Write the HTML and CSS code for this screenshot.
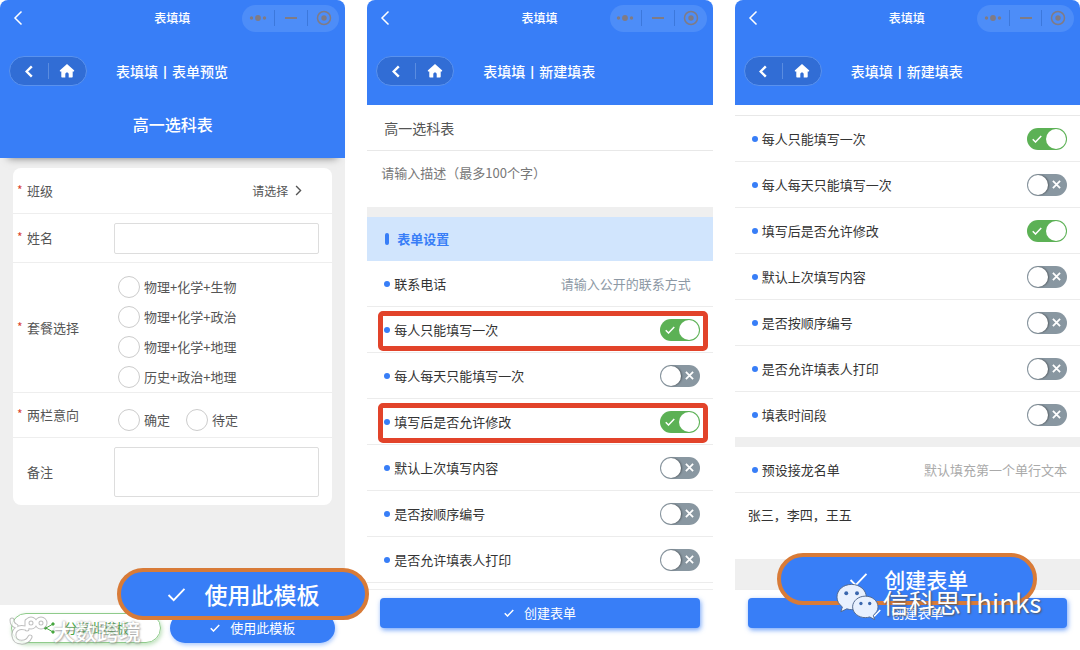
FILE: index.html
```html
<!DOCTYPE html>
<html lang="zh-CN">
<head>
    <meta charset="UTF-8">
    <meta name="viewport" content="width=device-width, initial-scale=1.0">
    <title>表填填</title>
    <link rel="stylesheet" href="styles.css">
    <script src="script.js" defer></script>
</head>
<body>
    <svg class="sprite" aria-hidden="true">
        <symbol id="icon-back" viewBox="0 0 10 16"><path d="M8.500 1.500 2 8l6.500 6.500"/></symbol>
        <symbol id="icon-home" viewBox="0 0 16 16"><path d="M8 1 1 7.200c-.5.600-.2 1.300.5 1.300h.8v5c0 .6.400 1 1 1h3v-3.300c0-1 .7-1.700 1.700-1.700s1.700.7 1.700 1.700v3.300h3c.6 0 1-.4 1-1v-5h.8c.7 0 1-.7.500-1.300z"/></symbol>
        <symbol id="icon-check" viewBox="0 0 20 16"><path d="m1.500 8.500 5.500 5.500L18.500 2"/></symbol>
        <symbol id="icon-cross" viewBox="0 0 10 10"><path d="m1 1 8 8M9 1 1 9"/></symbol>
        <symbol id="icon-dots" viewBox="0 0 18 8"><circle cx="2.500" cy="4" r="1.700"/><circle cx="9" cy="4" r="2.900"/><circle cx="15.500" cy="4" r="1.700"/></symbol>
        <symbol id="icon-target" viewBox="0 0 16 16"><circle cx="8" cy="8" r="6.500" fill="none" stroke="currentColor" stroke-width="1.500"/><circle cx="8" cy="8" r="2.700"/></symbol>
        <symbol id="icon-share" viewBox="0 0 12 12"><path d="M10 2 3 6l7 4"/><circle cx="10" cy="2" r="1.200"/><circle cx="2.500" cy="6" r="1.200"/><circle cx="10" cy="10" r="1.200"/></symbol>
    </svg>

    <main class="screens">
        <!-- preview -->
        <section class="phone preview">
            <header class="header" data-title="表单预览"></header>
            <h1 class="form-title">高一选科表</h1>
            <div class="preview-body">
                <form class="card">
                    <div class="field">
                        <span class="field-label required">班级</span>
                        <button type="button" class="picker">请选择
                            <svg class="icon-next"><use href="#icon-back"/></svg>
                        </button>
                    </div>
                    <div class="field field-name">
                        <label class="field-label required" for="name">姓名</label>
                        <input class="text-box" id="name" type="text">
                    </div>
                    <div class="field" role="radiogroup" aria-label="套餐选择">
                        <span class="field-label required">套餐选择</span>
                        <div class="options">
                            <label class="option"><input type="radio" name="combo">物理+化学+生物</label>
                            <label class="option"><input type="radio" name="combo">物理+化学+政治</label>
                            <label class="option"><input type="radio" name="combo">物理+化学+地理</label>
                            <label class="option"><input type="radio" name="combo">历史+政治+地理</label>
                        </div>
                    </div>
                    <div class="field" role="radiogroup" aria-label="两栏意向">
                        <span class="field-label required">两栏意向</span>
                        <div class="options options-inline">
                            <label class="option"><input type="radio" name="intent">确定</label>
                            <label class="option"><input type="radio" name="intent">待定</label>
                        </div>
                    </div>
                    <div class="field field-note">
                        <label class="field-label" for="note">备注</label>
                        <textarea class="text-box" id="note"></textarea>
                    </div>
                </form>
            </div>
            <footer class="footer-split">
                <button class="share-button"><svg class="icon-share"><use href="#icon-share"/></svg>分享此模板</button>
                <button class="use-button"><svg class="icon-check"><use href="#icon-check"/></svg>使用此模板</button>
                <div class="callout callout-use"><svg class="icon-check"><use href="#icon-check"/></svg>使用此模板</div>
                <div class="brand">
                    <svg class="brand-logo" viewBox="0 0 40 32">
                        <path class="logo-edge" d="M3 6c0 3 1 5 4 6M16 14c-6-2-12 2-11 8 1 8 13 8 16 1M18 7v8M18 9a4 4 0 1 1 8 0 4 4 0 0 1-8 0M28 9a4 4 0 1 1 8 0 4 4 0 0 1-8 0"/>
                        <path class="logo-fill" d="M3 6c0 3 1 5 4 6M16 14c-6-2-12 2-11 8 1 8 13 8 16 1M18 7v8M18 9a4 4 0 1 1 8 0 4 4 0 0 1-8 0M28 9a4 4 0 1 1 8 0 4 4 0 0 1-8 0"/>
                    </svg>
                    <span>大数跨境</span>
                </div>
            </footer>
        </section>

        <!-- new form, top of the page -->
        <section class="phone">
            <header class="header" data-title="新建填表"></header>
            <input class="title-input" type="text" value="高一选科表" aria-label="表单标题">
            <textarea class="desc-input" placeholder="请输入描述（最多100个字）" aria-label="描述"></textarea>
            <div class="divider"></div>
            <h2 class="section-title">表单设置</h2>
            <div class="setting">
                <label for="phone">联系电话</label>
                <input class="phone-input" id="phone" type="text" placeholder="请输入公开的联系方式">
            </div>
            <div class="settings" data-marked="0,2" data-count="6"></div>
            <footer class="footer">
                <button class="create-button"><svg class="icon-check"><use href="#icon-check"/></svg>创建表单</button>
            </footer>
        </section>

        <!-- new form, scrolled down -->
        <section class="phone">
            <header class="header" data-title="新建填表"></header>
            <div class="scrolled-edge"></div>
            <div class="settings settings-last" data-marked="" data-count="7"></div>
            <div class="divider"></div>
            <div class="setting">
                <span>预设接龙名单</span>
                <span class="hint">默认填充第一个单行文本</span>
            </div>
            <p class="names">张三，李四，王五</p>
            <div class="filler"></div>
            <footer class="footer">
                <button class="create-button"><svg class="icon-check"><use href="#icon-check"/></svg>创建表单</button>
                <div class="callout callout-create"><svg class="icon-check"><use href="#icon-check"/></svg>创建表单</div>
                <div class="account">
                    <svg class="wechat" viewBox="0 0 44 38">
                        <path d="M16 1C7.500 1 1 6.500 1 14c0 4 2 7.500 5.500 10L5 29l6-3c2 .6 3.500.8 5 .8 8.500 0 15-5.600 15-12.800S24.500 1 16 1z"/>
                        <circle class="eye" cx="10.500" cy="10" r="2"/><circle class="eye" cx="21.500" cy="10" r="2"/>
                        <path d="M30 13c-7 0-13 4.800-13 11s6 11 13 11c1.500 0 3-.2 4.500-.7l5 2.700-1.300-4.500C41 30.500 43 27.500 43 24c0-6.200-6-11-13-11z"/>
                        <circle class="eye" cx="25.500" cy="20.500" r="1.700"/><circle class="eye" cx="34.500" cy="20.500" r="1.700"/>
                    </svg>
                    <span>信科思Thinks</span>
                </div>
            </footer>
        </section>
    </main>
</body>
</html>
```
FILE: styles.css
```css
* {
    box-sizing: border-box;
}
body {
    margin: 0;
    background-color: white;
    color: #333;
    font-family: "Noto Sans CJK SC", sans-serif;
    font-size: 13px;
    line-height: 20px;
}
h1, h2, p {
    margin: 0;
}
button, input, textarea {
    font: inherit;
    color: inherit;
    margin: 0;
    padding: 0;
    border: none;
    background: none;
}
textarea {
    display: block;
    resize: none;
}
button {
    cursor: pointer;
}
svg {
    flex: none;
    fill: currentColor;
}
.sprite {
    position: absolute;
    width: 0;
    height: 0;
}
#icon-back, #icon-check, #icon-cross, #icon-share {
    stroke: currentColor;
}
#icon-back, #icon-check, #icon-cross, #icon-share path {
    fill: none;
}
.screens {
    display: grid;
    grid-template-columns: repeat(3, minmax(0, 1fr));
    gap: 22px;
    min-height: 100vh;
}
.phone {
    display: flex;
    flex-direction: column;
}

/* header */
.header {
    background-color: #387ef7;
    color: white;
    border-radius: 8px 8px 0 0;
    height: 105px;
}
.status {
    display: grid;
    grid-template-columns: 1fr auto 1fr;
    align-items: center;
    height: 36px;
    padding: 0 6px 0 13px;
    font-size: 12px;
    font-weight: 500;
}
.status-title {
    padding-right: 8px;
}
.back {
    display: flex;
}
.back svg {
    width: 10px;
    height: 16px;
    stroke-width: 1.5;
}
.capsule {
    justify-self: end;
    display: flex;
    align-items: center;
    height: 27px;
    width: 97px;
    border-radius: 14px;
    background-color: #4d8df8;
    color: #807b84;
}
.capsule span, .nav-pill button {
    flex: 1;
    display: flex;
    justify-content: center;
    align-items: center;
    height: 16px;
}
.capsule span + span {
    border-left: 1px solid #3c78dc;
}
.icon-dots {
    width: 18px;
    height: 8px;
}
.icon-target {
    width: 16px;
    height: 16px;
}
.minus {
    width: 12px;
    height: 2px;
    background-color: currentColor;
}
.nav {
    display: flex;
    align-items: center;
    gap: 29px;
    padding: 20px 9px 0;
    font-size: 14px;
    font-weight: 500;
    line-height: 18px;
}
.nav-pill {
    display: flex;
    align-items: center;
    width: 78px;
    height: 30px;
    border: 1px solid #5a92ee;
    border-radius: 15px;
    background-color: #316dd5;
}
.nav-pill button + button {
    border-left: 1px solid #5a8ce0;
}
.nav-pill .icon-back {
    width: 8px;
    height: 13px;
    stroke-width: 3;
}
.icon-home {
    width: 16px;
    height: 16px;
}

/* preview */
.form-title {
    position: relative;
    background-color: #387ef7;
    color: white;
    height: 53px;
    padding-top: 7px;
    font-size: 16px;
    font-weight: 500;
    line-height: 24px;
    text-align: center;
    box-shadow: 0 8px 8px -8px rgba(0, 0, 0, 0.5);
}
.preview-body {
    flex: 1;
    background-color: #efefef;
    padding: 10px 13px;
    color: #555;
}
.card {
    background-color: white;
    border-radius: 8px;
}
.field {
    display: flex;
    align-items: center;
    min-height: 45px;
    padding: 0 13px 0 14px;
}
.field + .field {
    border-top: 1px solid #eee;
}
.field-name {
    min-height: 49px;
}
.field-note {
    min-height: 68px;
}
.field-label {
    position: relative;
    width: 87px;
}
.required::before {
    content: "*";
    position: absolute;
    left: -10px;
    top: -1px;
    color: #d9432f;
    font-size: 12px;
}
.picker {
    display: flex;
    align-items: center;
    gap: 7px;
    margin-left: auto;
    padding-right: 17px;
    font-size: 12px;
}
.icon-next {
    width: 7px;
    height: 11px;
    stroke-width: 2;
    transform: rotate(180deg);
}
.text-box {
    flex: 1;
    min-width: 0;
    height: 31px;
    padding: 4px 8px;
    border: 1px solid #ddd;
    border-radius: 2px;
}
.field-note .text-box {
    height: 50px;
}
.options {
    padding: 9px 0 0 4px;
}
.options-inline {
    display: flex;
    gap: 16px;
}
.option {
    display: flex;
    align-items: center;
    gap: 4px;
    height: 30px;
}
.option input {
    appearance: none;
    width: 22px;
    height: 22px;
    border: 1px solid #ccc;
    border-radius: 50%;
}
.option input:checked {
    border: 6px solid #387ef7;
}
.footer-split {
    position: relative;
    display: flex;
    align-items: center;
    gap: 9px;
    height: 45px;
    padding: 0 10px 0 11px;
}
.share-button, .use-button {
    display: flex;
    align-items: center;
    justify-content: center;
    height: 30px;
    border-radius: 15px;
}
.share-button {
    flex: 9;
    gap: 9px;
    border: 1px solid #8fcb8b;
    color: #46a63f;
    box-shadow: 1px 2px 4px rgba(91, 177, 86, 0.4);
}
.icon-share {
    width: 12px;
    height: 12px;
}
.use-button {
    flex: 10;
    gap: 10px;
    background-color: #387ef7;
    color: white;
    box-shadow: 1px 2px 4px rgba(56, 126, 247, 0.4);
}
.icon-check {
    width: 10px;
    height: 8px;
    stroke-width: 3;
}

/* enlarged button drawn over the footer */
.callout {
    position: absolute;
    display: flex;
    align-items: center;
    justify-content: center;
    height: 52px;
    border: 4px solid #d87b38;
    border-radius: 26px;
    background-color: #387ef7;
    color: white;
    font-weight: 500;
}
.callout .icon-check {
    width: 19px;
    height: 15px;
    stroke-width: 2;
}
.callout-use {
    left: 117px;
    bottom: 30px;
    width: 252px;
    gap: 19px;
    font-size: 23px;
    z-index: 1;
}
.callout-create {
    left: 42px;
    bottom: 45px;
    width: 260px;
    gap: 16px;
    padding-left: 4px;
    font-size: 21px;
}
.brand, .account {
    position: absolute;
    display: flex;
    align-items: center;
    color: white;
    white-space: nowrap;
}
.brand {
    left: 9px;
    bottom: 4px;
    gap: 4px;
    font-size: 22px;
    font-weight: 500;
    line-height: 32px;
    text-shadow: 0 0 2px #777, 1px 1px 2px #999;
    opacity: 0.75;
}
.brand-logo {
    width: 40px;
    height: 32px;
}
.logo-edge, .logo-fill {
    fill: none;
    stroke: #aaa;
    stroke-width: 5;
    stroke-linecap: round;
}
.logo-fill {
    stroke: white;
    stroke-width: 3;
}
.account {
    left: 101px;
    bottom: 29px;
    gap: 4px;
    font-size: 26px;
    line-height: 38px;
    text-shadow: 1px 1px 2px #555;
}
.wechat {
    width: 43px;
    height: 38px;
    fill: #e8f0fe;
    stroke: #53698f;
    stroke-width: 1;
}
.wechat .eye {
    fill: #3b67ae;
    stroke: none;
}

/* new form */
.title-input {
    height: 46px;
    padding: 0 17px;
    border-bottom: 1px solid #e8e8e8;
    color: #555;
    font-size: 14px;
}
.desc-input {
    height: 56px;
    padding: 12px 14px;
}
.desc-input::placeholder {
    color: #777;
}
.divider {
    height: 10px;
    background-color: #efefef;
}
.section-title {
    display: flex;
    align-items: center;
    gap: 8px;
    height: 44px;
    padding-left: 18px;
    background-color: #d1e5fd;
    color: #387ef7;
    font-size: 13px;
    font-weight: 700;
}
.section-title::before {
    content: "";
    width: 4px;
    height: 12px;
    border-radius: 2px;
    background-color: #387ef7;
}
.setting {
    position: relative;
    display: flex;
    align-items: center;
    height: 46px;
    padding: 0 13px 0 17px;
    border-bottom: 1px solid #ececec;
}
.setting::before {
    content: "";
    flex: none;
    width: 6px;
    height: 6px;
    margin-right: 4px;
    border-radius: 50%;
    background-color: #387ef7;
}
.settings-last .setting:last-child {
    height: 45px;
    border-bottom: none;
}
.marked::after {
    content: "";
    position: absolute;
    inset: 4px 5px 1px 11px;
    border: 5px solid #e2432a;
    border-radius: 5px;
    pointer-events: none;
}
.phone-input {
    flex: 1;
    min-width: 0;
    padding-right: 9px;
    text-align: right;
}
.phone-input::placeholder {
    color: #8d99a5;
}
.hint {
    margin-left: auto;
    color: #aaa;
}
.switch {
    display: grid;
    align-items: center;
    margin-left: auto;
    color: white;
}
.switch > * {
    grid-area: 1 / 1;
}
.switch input {
    appearance: none;
    width: 40px;
    height: 22px;
    padding: 1px;
    border-radius: 11px;
    background-color: #8997a1;
    cursor: pointer;
}
.switch input::before {
    content: "";
    display: block;
    width: 20px;
    height: 20px;
    border-radius: 50%;
    background-color: white;
    box-shadow: 1px 0 2px rgba(0, 0, 0, 0.4);
}
.switch input:checked {
    background-color: #5cb155;
}
.switch input:checked::before {
    margin-left: 18px;
    box-shadow: none;
}
.switch svg {
    pointer-events: none;
}
.switch .icon-check {
    margin-left: 5px;
}
.switch .icon-cross {
    width: 9px;
    height: 9px;
    margin-left: 25px;
    stroke-width: 2;
}
.switch input:checked ~ .icon-cross,
.switch input:not(:checked) ~ .icon-check {
    display: none;
}
.scrolled-edge {
    height: 11px;
    border-bottom: 1px solid #e8e8e8;
}
.names {
    padding: 12px 13px 34px;
}
.filler {
    flex: 1;
    background-color: #efefef;
}
.footer {
    position: relative;
    margin-top: auto;
    height: 61px;
    padding: 8px 13px;
    border-top: 1px solid #eee;
}
.create-button {
    display: flex;
    align-items: center;
    justify-content: center;
    gap: 10px;
    width: 100%;
    height: 30px;
    border-radius: 4px;
    background-color: #387ef7;
    color: white;
    box-shadow: 1px 2px 5px rgba(56, 126, 247, 0.7);
}
```
FILE: script.js
```js
const settings = [
    { id: "once", name: "每人只能填写一次", on: true },
    { id: "daily", name: "每人每天只能填写一次", on: false },
    { id: "edit", name: "填写后是否允许修改", on: true },
    { id: "last", name: "默认上次填写内容", on: false },
    { id: "number", name: "是否按顺序编号", on: false },
    { id: "print", name: "是否允许填表人打印", on: false },
    { id: "period", name: "填表时间段", on: false }
];

document.querySelectorAll(".header").forEach(header => {
    header.innerHTML = `
        <div class="status">
            <button class="back" aria-label="返回"><svg><use href="#icon-back"/></svg></button>
            <span class="status-title">表填填</span>
            <div class="capsule">
                <span><svg class="icon-dots"><use href="#icon-dots"/></svg></span>
                <span><i class="minus"></i></span>
                <span><svg class="icon-target"><use href="#icon-target"/></svg></span>
            </div>
        </div>
        <div class="nav">
            <div class="nav-pill">
                <button aria-label="返回"><svg class="icon-back"><use href="#icon-back"/></svg></button>
                <button aria-label="首页"><svg class="icon-home"><use href="#icon-home"/></svg></button>
            </div>
            <span>表填填丨${header.dataset.title}</span>
        </div>
    `;
});

document.querySelectorAll(".settings").forEach((list, n) => {
    const marked = list.dataset.marked.split(",");
    settings.slice(0, Number(list.dataset.count)).forEach((item, i) => {
        const id = `${item.id}-${n}`;
        const mark = marked.includes(String(i)) ? " marked" : "";
        list.innerHTML += `
            <div class="setting${mark}">
                <label for="${id}">${item.name}</label>
                <span class="switch">
                    <input type="checkbox" id="${id}" ${item.on ? "checked" : ""}>
                    <svg class="icon-check"><use href="#icon-check"/></svg>
                    <svg class="icon-cross"><use href="#icon-cross"/></svg>
                </span>
            </div>
        `;
    });
});
```
